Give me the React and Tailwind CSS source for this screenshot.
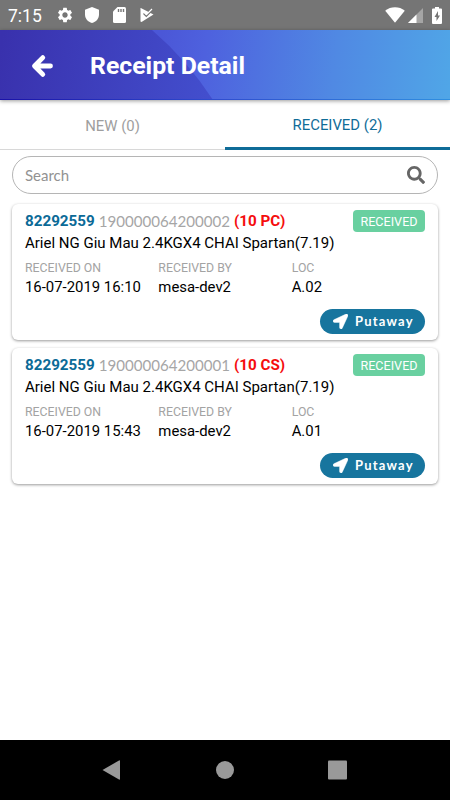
import React, { useState } from 'react';
import { FaLocationArrow, FaSearch } from 'react-icons/fa';
import { MdSettings } from 'react-icons/md';

const receipts = [
  {
    id: '82292559',
    pallet: '190000064200002',
    qty: '(10 PC)',
    name: 'Ariel NG Giu Mau 2.4KGX4 CHAI Spartan(7.19)',
    receivedOn: '16-07-2019 16:10',
    receivedBy: 'mesa-dev2',
    loc: 'A.02',
  },
  {
    id: '82292559',
    pallet: '190000064200001',
    qty: '(10 CS)',
    name: 'Ariel NG Giu Mau 2.4KGX4 CHAI Spartan(7.19)',
    receivedOn: '16-07-2019 15:43',
    receivedBy: 'mesa-dev2',
    loc: 'A.01',
  },
];

function StatusBar() {
  return (
    <div className="h-[30px] bg-[#757575] text-white flex items-center justify-between pl-[8px] pr-[8px]">
      <div className="flex items-center">
        <span className="w-[48px] text-[17.5px] leading-[30px] pt-px">7:15</span>
        <MdSettings className="w-[18px] h-[18px]" />
        <svg className="w-[14px] h-[16px] ml-[11px]" viewBox="0 0 14 16" fill="currentColor">
          <path d="M7 0 14 2.8V7.5C14 11.5 11 15 7 16 3 15 0 11.5 0 7.5V2.8Z" />
        </svg>
        <svg className="w-[13px] h-[16px] ml-[14px]" viewBox="0 0 13 16">
          <path
            fill="currentColor"
            d="M4.5 0H11.5Q13 0 13 1.5V14.5Q13 16 11.5 16H1.5Q0 16 0 14.5V4.5Z"
          />
          <path stroke="#757575" strokeWidth="1.4" d="M5.5 2V5M8 2V5M10.5 2V5" />
        </svg>
        <svg className="w-[14px] h-[16px] ml-[14px]" viewBox="0 0 14 16">
          <path fill="currentColor" d="M.8 1 13.5 7.5 1.5 15 .5 14.5V1.5Z" />
          <path fill="none" stroke="#757575" strokeWidth="1.4" d="M3.5 6.5 6.3 9.3 12 3.5" />
          <path fill="none" stroke="currentColor" strokeWidth="1.2" d="M4.4 5.6 6.4 7.6 12 2" />
        </svg>
      </div>
      <div className="flex items-center">
        <svg className="w-[20px] h-[16px] mb-px" viewBox="0 0 20 16" fill="currentColor">
          <path d="M.2 3.8C5.8-.8 14.2-.8 19.8 3.8L10.4 15.3Q10 15.7 9.6 15.3Z" />
        </svg>
        <svg className="w-[15px] h-[15px] ml-[3px]" viewBox="0 0 15 15" fill="currentColor">
          <path d="M15 0V15H0Z" opacity=".35" />
          <path d="M8.5 6.5V15H0Z" />
        </svg>
        <svg className="w-[10px] h-[17px] ml-[9px]" viewBox="0 0 10 17">
          <path fill="currentColor" d="M3 0H7V1.5H9Q10 1.5 10 2.5V16Q10 17 9 17H1Q0 17 0 16V2.5Q0 1.5 1 1.5H3Z" />
          <path fill="#757575" d="M6 4 2.5 10H4.5V14L8 8.5H6Z" />
        </svg>
      </div>
    </div>
  );
}

function Header() {
  return (
    <div className="relative z-10 h-[70px] shadow-[0_1px_4px_rgba(0,0,0,0.4)]">
      <svg className="absolute inset-0 w-full h-full" viewBox="0 0 450 70" preserveAspectRatio="none">
        <defs>
          <linearGradient id="light" gradientUnits="userSpaceOnUse" x1="160" y1="20" x2="450" y2="60">
            <stop offset="0" stopColor="#4b57d7" />
            <stop offset="0.15" stopColor="#4e61de" />
            <stop offset="0.6" stopColor="#5089e3" />
            <stop offset="1" stopColor="#50a6e7" />
          </linearGradient>
          <linearGradient id="dark" gradientUnits="userSpaceOnUse" x1="0" y1="20" x2="215" y2="55">
            <stop offset="0" stopColor="#3931ad" />
            <stop offset="1" stopColor="#434fce" />
          </linearGradient>
          <linearGradient id="edge" gradientUnits="userSpaceOnUse" x1="0" y1="0" x2="450" y2="0">
            <stop offset="0" stopColor="#1a12a8" />
            <stop offset="0.5" stopColor="#2f4fd0" />
            <stop offset="1" stopColor="#2f8fe0" />
          </linearGradient>
        </defs>
        <path fill="url(#light)" d="M0 0H450V70H0Z" />
        <path fill="url(#dark)" d="M0 0H152Q187 30 213 70H0Z" />
        <path fill="url(#edge)" d="M0 69H450V70H0Z" />
      </svg>
      <div className="relative h-full flex items-center text-white">
        <svg
          className="w-[22px] h-[24px] ml-[31px] mt-[2px]"
          viewBox="0 0 22 24"
          fill="none"
          stroke="currentColor"
          strokeWidth="4.8"
          strokeLinecap="round"
          strokeLinejoin="round"
        >
          <path d="M11.8 3.6 3.5 12 11.8 20.4M4.5 12H19.5" />
        </svg>
        <h1 className="ml-[37px] pt-[3px] text-[24.8px] font-bold leading-none">Receipt Detail</h1>
      </div>
    </div>
  );
}

function Field({ label, value }) {
  return (
    <div>
      <div className="text-[12.3px] leading-[18px] text-[#a3a3a3]">{label}</div>
      <div className="text-[14.9px] leading-[20px]">{value}</div>
    </div>
  );
}

function ReceiptCard({ item }) {
  return (
    <div className="h-[136px] px-[13px] pt-[6px] pb-[6px] flex flex-col rounded-[6px] bg-white text-black shadow-[0_1px_3px_rgba(0,0,0,0.4)]">
      <div className="flex items-start justify-between h-[22px]">
        <div className="flex gap-[4px] text-[15.2px] leading-[23px] whitespace-nowrap">
          <span className="font-bold text-[#0b6a97]">{item.id}</span>
          <span className="font-['Lato',sans-serif] text-[15.1px] text-[#a6a6a6]">{item.pallet}</span>
          <span className="font-bold text-[#f50d0d]">{item.qty}</span>
        </div>
        <span className="w-[72px] h-[22px] rounded-[4px] bg-[#69d0a0] text-white text-[12.6px] leading-[23px] text-center">
          RECEIVED
        </span>
      </div>
      <div className="text-[15px] leading-[22px] whitespace-nowrap">{item.name}</div>
      <div className="mt-[5px] grid grid-cols-3">
        <Field label="RECEIVED ON" value={item.receivedOn} />
        <Field label="RECEIVED BY" value={item.receivedBy} />
        <Field label="LOC" value={item.loc} />
      </div>
      <button className="mt-auto self-end w-[105px] h-[25px] pl-[13px] flex items-center rounded-full bg-[#17759e] text-white">
        <FaLocationArrow className="w-[15px] h-[15px]" stroke="currentColor" strokeWidth="14" />
        <span className="ml-[7px] font-['Lato',sans-serif] font-bold text-[13px] leading-[25px] tracking-[1.2px]">
          Putaway
        </span>
      </button>
    </div>
  );
}

export default function App() {
  const [search, setSearch] = useState('');

  return (
    <div className="w-[450px] h-[800px] flex flex-col overflow-hidden bg-white font-['Roboto',sans-serif]">
      <StatusBar />
      <Header />

      {/* Tabs */}
      <div className="h-[50px] grid grid-cols-2 text-[14.9px] text-center">
        <button className="border-b border-[#d8d8d8] pt-[3px] text-[#9e9e9e]">
          NEW (0)
        </button>
        <button className="border-b-3 border-[#0f6c98] pt-[3px] text-[#0f6c98]">RECEIVED (2)</button>
      </div>

      <div className="flex-1 px-[12px] pt-[6px]">
        <div className="h-[38px] pl-[12px] pr-[12px] flex items-center rounded-full border border-[#b5b5b5]">
          <input
            className="flex-1 outline-none font-['Lato',sans-serif] text-[15px] placeholder:text-[#929292]"
            value={search}
            onChange={(e) => setSearch(e.target.value)}
            placeholder="Search"
          />
          <FaSearch className="w-[18px] h-[18px] text-[#666666]" />
        </div>
        <div className="mt-[10px] flex flex-col gap-[8px]">
          {receipts.map((item) => (
            <ReceiptCard key={item.pallet} item={item} />
          ))}
        </div>
      </div>

      {/* Android navigation */}
      <div className="h-[60px] bg-black flex items-center">
        <svg className="w-full h-full" viewBox="0 0 450 60" fill="#999999">
          <path d="M102.5 30 119 20.5Q120 20 120 21V39Q120 40 119 39.5Z" />
          <circle cx="225" cy="30" r="9" />
          <rect x="328" y="20.5" width="19" height="19" rx="1" />
        </svg>
      </div>
    </div>
  );
}
